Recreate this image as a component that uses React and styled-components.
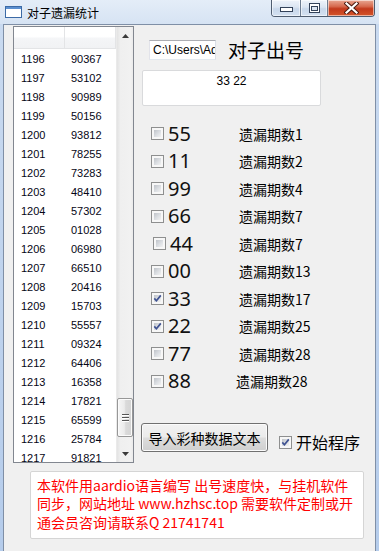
import React from 'react';
import styled, { createGlobalStyle } from 'styled-components';

const UI = `"Liberation Sans", "Noto Sans CJK SC", sans-serif`;
const CJK = `"Noto Sans CJK SC", "Liberation Sans", sans-serif`;
const LATIN = `"Noto Sans", "Noto Sans CJK SC", sans-serif`;

const GlobalStyle = createGlobalStyle`
  html, body {
    margin: 0;
    padding: 0;
    background: #f0f0f0;
  }
  body {
    width: 379px;
    height: 551px;
    overflow: hidden;
    font-family: ${UI};
  }
`;

const Window = styled.div`
  width: 379px;
  height: 551px;
  display: flex;
  flex-direction: column;
  background: linear-gradient(to bottom, #cddcef, #bcd1ec);
  overflow: hidden;
`;

const TitleBar = styled.div`
  height: 24px;
  flex: none;
  display: flex;
  align-items: center;
  background: linear-gradient(to bottom, #e4edf8, #d6e3f3);
`;

const AppIcon = styled.svg`
  margin-left: 5px;
  flex: none;
`;

const Title = styled.span`
  margin-left: 5px;
  font: 12px ${CJK};
  color: #000;
`;

const CaptionGroup = styled.div`
  margin-left: auto;
  margin-right: 4px;
  align-self: flex-start;
  display: flex;
  height: 16px;
  border: 1px solid #4f5d70;
  border-top: none;
  border-radius: 0 0 4px 4px;
  overflow: hidden;
`;

const CapBtn = styled.div`
  width: ${(p) => p.$w}px;
  display: flex;
  align-items: center;
  justify-content: center;
  box-shadow: inset 0 0 0 1px rgba(255, 255, 255, 0.55);
  border-left: ${(p) => (p.$first ? 'none' : '1px solid #6d7c90')};
  background: ${(p) =>
    p.$close
      ? 'linear-gradient(to bottom, #e8a793 0%, #d66a4f 40%, #c2391c 55%, #d4552a 100%)'
      : 'linear-gradient(to bottom, #eef3fa 0%, #dbe5f2 45%, #c8d7ea 55%, #d4e1f1 100%)'};
`;

const Body = styled.div`
  flex: 1;
  display: flex;
  min-height: 0;
`;

const FrameEdge = styled.div`
  width: 3px;
  flex: none;
  background: linear-gradient(to bottom, #c9daf0, #b5cceb);
`;

const Client = styled.div`
  flex: 1;
  display: flex;
  flex-direction: column;
  background: #f0f0f0;
  border: 1px solid #7f8fa6;
  border-bottom: none;
  min-width: 0;
`;

const TopRow = styled.div`
  display: flex;
  align-items: flex-start;
  padding-left: 9px;
  margin-top: 1px;
`;

/* ---------- list view ---------- */

const ListBox = styled.div`
  width: 121px;
  height: 437px;
  box-sizing: border-box;
  border: 1px solid #828790;
  background: #fff;
  display: flex;
  flex: none;
  overflow: hidden;
`;

const ListBody = styled.div`
  width: 102px;
  display: flex;
  flex-direction: column;
`;

const HeaderRow = styled.div`
  display: grid;
  grid-template-columns: 51px 51px;
  height: 21px;
  flex: none;
  background: linear-gradient(to bottom, #ffffff 0%, #ffffff 45%, #f4f5f7 55%, #f1f2f4 100%);
  border-bottom: 1px solid #e3e4e6;
`;

const HeaderCell = styled.div`
  border-right: 1px solid #e3e4e6;
`;

const DataRow = styled.div`
  display: grid;
  grid-template-columns: 51px 51px;
  height: 19px;
  flex: none;
  align-items: center;
  font: 11px ${UI};
  color: #050515;
`;

const Cell = styled.span`
  padding-left: ${(p) => p.$pad}px;
`;

const ScrollBar = styled.div`
  width: 17px;
  flex: none;
  display: flex;
  flex-direction: column;
  background: linear-gradient(to right, #e3e3e3 0%, #efefef 20%, #f1f1f1 80%, #e8e8e8 100%);
  border-left: 1px solid #eaeaea;
`;

const ScrollArrow = styled.div`
  height: 17px;
  flex: none;
  display: flex;
  align-items: center;
  justify-content: center;
`;

const ScrollTrack = styled.div`
  flex: 1;
  display: flex;
  flex-direction: column;
  justify-content: flex-end;
  padding-bottom: 8px;
`;

const Thumb = styled.div`
  height: 39px;
  margin: 0 1px 0 0;
  box-sizing: border-box;
  border: 1px solid #979797;
  border-radius: 2px;
  background: linear-gradient(to right, #f6f6f6 0%, #ebebeb 45%, #dadada 55%, #d4d4d4 100%);
  box-shadow: inset 0 0 0 1px #fbfbfb;
  display: flex;
  flex-direction: column;
  align-items: center;
  justify-content: center;
  gap: 2px;
`;

const Grip = styled.span`
  width: 7px;
  height: 1px;
  background: #555;
  box-shadow: 0 1px 0 #fff;
`;

/* ---------- right panel ---------- */

const RightPanel = styled.div`
  margin-left: 7px;
  flex: 1;
  display: flex;
  flex-direction: column;
`;

const PathRow = styled.div`
  display: flex;
  align-items: center;
  margin-top: 13px;
`;

const PathInput = styled.input`
  margin: 0 0 0 8px;
  width: 67px;
  height: 20px;
  box-sizing: border-box;
  border: 1px solid;
  border-color: #abadb3 #dbdfe6 #e3e9ef #e2e3ea;
  background: #fff;
  padding: 0 0 0 3px;
  font: 12px ${UI};
  color: #000;
  outline: none;
`;

const Heading = styled.span`
  margin-left: 12px;
  font: 19px ${CJK};
  color: #000;
  line-height: 22px;
`;

const ResultBox = styled.div`
  margin: 9px 0 0 1px;
  width: 179px;
  height: 36px;
  box-sizing: border-box;
  border: 1px solid #d9dadc;
  border-radius: 2px;
  background: #fff;
  text-align: center;
  padding-top: 3px;
  font: 12px ${UI};
  color: #000;
`;

const PickList = styled.div`
  margin-top: 14px;
  display: flex;
  flex-direction: column;
`;

const PickRow = styled.div`
  height: 27.5px;
  display: flex;
  align-items: center;
  padding-left: ${(p) => 10 + p.$shift}px;
`;

const Box = styled.span`
  position: relative;
  flex: none;
  width: 13px;
  height: 13px;
  box-sizing: border-box;
  border: 1px solid #8e8f8f;
  background: #f7f7f7;
  &::before {
    content: '';
    position: absolute;
    inset: 2px;
    background: linear-gradient(135deg, #bfc3c9 0%, #dcdfe3 55%, #f2f2f2 100%);
  }
  svg {
    position: absolute;
    left: 0;
    top: 0;
  }
`;

const Num = styled.span`
  margin-left: 4px;
  width: ${(p) => 71 - p.$shift + p.$labelShift}px;
  flex: none;
  font: 20px ${LATIN};
  line-height: 24px;
  color: #111;
`;

const Miss = styled.span`
  font: 14px ${CJK};
  color: #000;
  line-height: 18px;
`;

const BottomRow = styled.div`
  display: flex;
  align-items: flex-start;
  margin-top: 28px;
`;

const PushButton = styled.button`
  width: 127px;
  height: 29px;
  box-sizing: border-box;
  padding: 0;
  border: 1px solid #707070;
  border-radius: 3px;
  background: linear-gradient(to bottom, #f2f2f2 0%, #ebebeb 48%, #dddddd 52%, #cfcfcf 100%);
  box-shadow: inset 0 0 0 1px #fbfbfb;
  font: 14px ${CJK};
  color: #000;
`;

const StartToggle = styled.label`
  display: flex;
  align-items: center;
  margin: 9px 0 0 11px;
`;

const StartText = styled.span`
  margin-left: 4px;
  font: 16px ${CJK};
  line-height: 20px;
  color: #000;
`;

/* ---------- notice ---------- */

const Notice = styled.div`
  margin: 8px 0 0 26px;
  width: 334px;
  height: 68px;
  box-sizing: border-box;
  border: 1px solid #d5d5d5;
  border-radius: 2px;
  background: #fff;
  padding: 4px 0 0 6px;
  font: 14px ${CJK};
  line-height: 18.3px;
  color: #ff0000;
`;

const NoticeLine = styled.div`
  white-space: nowrap;
`;

const rows = [
  ['1196', '90367'], ['1197', '53102'], ['1198', '90989'], ['1199', '50156'],
  ['1200', '93812'], ['1201', '78255'], ['1202', '73283'], ['1203', '48410'],
  ['1204', '57302'], ['1205', '01028'], ['1206', '06980'], ['1207', '66510'],
  ['1208', '20416'], ['1209', '15703'], ['1210', '55557'], ['1211', '09324'],
  ['1212', '64406'], ['1213', '16358'], ['1214', '17821'], ['1215', '65599'],
  ['1216', '25784'], ['1217', '91821'],
];

const picks = [
  { n: '55', label: '遗漏期数1' },
  { n: '11', label: '遗漏期数2' },
  { n: '99', label: '遗漏期数4' },
  { n: '66', label: '遗漏期数7' },
  { n: '44', label: '遗漏期数7', shift: 2 },
  { n: '00', label: '遗漏期数13' },
  { n: '33', label: '遗漏期数17', checked: true },
  { n: '22', label: '遗漏期数25', checked: true },
  { n: '77', label: '遗漏期数28' },
  { n: '88', label: '遗漏期数28', labelShift: -3 },
];

function CheckBox({ checked }) {
  return (
    <Box>
      {checked && (
        <svg width="11" height="11" viewBox="0 0 11 11">
          <path d="M2.3 5.4 L4.4 7.8 L8.8 2.4" fill="none" stroke="#3f5291" strokeWidth="1.7" />
        </svg>
      )}
    </Box>
  );
}

function Triangle({ up }) {
  return (
    <svg width="7" height="4" viewBox="0 0 7 4">
      <path d={up ? 'M0 4 L3.5 0 L7 4 Z' : 'M0 0 L7 0 L3.5 4 Z'} fill="#3a3a3a" />
    </svg>
  );
}

export default function App() {
  return (
    <>
      <GlobalStyle />
      <Window>
        <TitleBar>
          <AppIcon width="17" height="12" viewBox="0 0 17 12">
            <rect x="0.5" y="0.5" width="16" height="11" fill="#fff" stroke="#3b6aa6" />
            <rect x="1" y="1" width="15" height="2" fill="#5b8fd0" />
          </AppIcon>
          <Title>对子遗漏统计</Title>
          <CaptionGroup>
            <CapBtn $w={28} $first>
              <svg width="13" height="5" viewBox="0 0 13 5" style={{ marginTop: 3 }}>
                <rect x="0.5" y="0.5" width="12" height="4" fill="#fff" stroke="#34435a" />
              </svg>
            </CapBtn>
            <CapBtn $w={26}>
              <svg width="11" height="10" viewBox="0 0 11 10">
                <rect x="0.5" y="0.5" width="10" height="9" fill="#fff" stroke="#34435a" />
                <rect x="2.5" y="3.5" width="6" height="4" fill="#dbe5f2" stroke="#34435a" />
              </svg>
            </CapBtn>
            <CapBtn $w={46} $close>
              <svg width="15" height="12" viewBox="0 0 15 12">
                <path d="M2.5 1.5 L12.5 10.5 M12.5 1.5 L2.5 10.5" stroke="#4a1a10" strokeWidth="4.2" strokeLinecap="square" />
                <path d="M2.5 1.5 L12.5 10.5 M12.5 1.5 L2.5 10.5" stroke="#fff" strokeWidth="2.2" strokeLinecap="square" />
              </svg>
            </CapBtn>
          </CaptionGroup>
        </TitleBar>
        <Body>
          <FrameEdge />
          <Client>
            <TopRow>
              <ListBox>
                <ListBody>
                  <HeaderRow>
                    <HeaderCell />
                    <HeaderCell />
                  </HeaderRow>
                  {rows.map(([a, b]) => (
                    <DataRow key={a}>
                      <Cell $pad={7}>{a}</Cell>
                      <Cell $pad={6}>{b}</Cell>
                    </DataRow>
                  ))}
                </ListBody>
                <ScrollBar>
                  <ScrollArrow>
                    <Triangle up />
                  </ScrollArrow>
                  <ScrollTrack>
                    <Thumb>
                      <Grip />
                      <Grip />
                      <Grip />
                    </Thumb>
                  </ScrollTrack>
                  <ScrollArrow>
                    <Triangle />
                  </ScrollArrow>
                </ScrollBar>
              </ListBox>
              <RightPanel>
                <PathRow>
                  <PathInput readOnly defaultValue="C:\Users\Administrator\Desktop" />
                  <Heading>对子出号</Heading>
                </PathRow>
                <ResultBox>33 22</ResultBox>
                <PickList>
                  {picks.map((p, i) => (
                    <PickRow key={i} $shift={p.shift || 0}>
                      <CheckBox checked={p.checked} />
                      <Num $shift={p.shift || 0} $labelShift={p.labelShift || 0}>
                        {p.n}
                      </Num>
                      <Miss>{p.label}</Miss>
                    </PickRow>
                  ))}
                </PickList>
                <BottomRow>
                  <PushButton>导入彩种数据文本</PushButton>
                  <StartToggle>
                    <CheckBox checked />
                    <StartText>开始程序</StartText>
                  </StartToggle>
                </BottomRow>
              </RightPanel>
            </TopRow>
            <Notice>
              <NoticeLine>本软件用aardio语言编写 出号速度快，与挂机软件</NoticeLine>
              <NoticeLine>同步，网站地址 www.hzhsc.top 需要软件定制或开</NoticeLine>
              <NoticeLine>通会员咨询请联系Q 21741741</NoticeLine>
            </Notice>
          </Client>
          <FrameEdge />
        </Body>
      </Window>
    </>
  );
}
